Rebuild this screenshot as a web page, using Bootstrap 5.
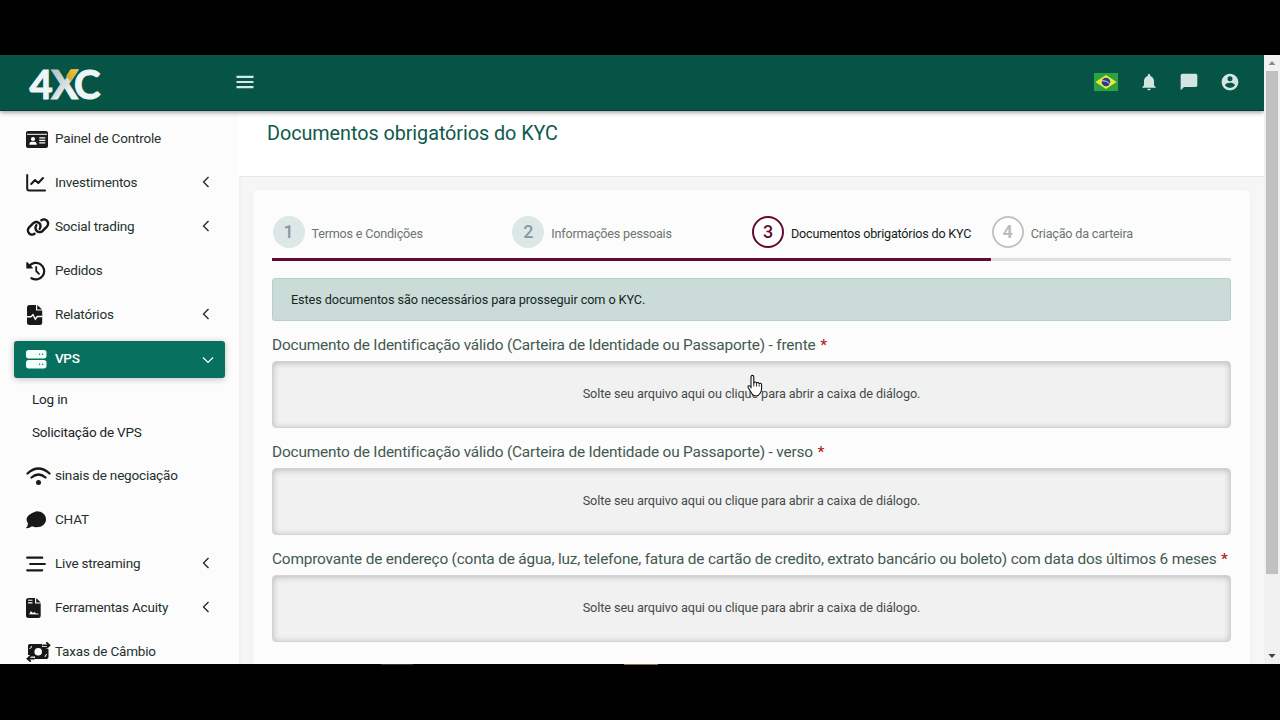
<!DOCTYPE html>
<html lang="pt-BR">
<head>
<meta charset="utf-8">
<meta name="viewport" content="width=device-width, initial-scale=1">
<title>4XC - Documentos obrigatórios do KYC</title>
<link href="https://cdn.jsdelivr.net/npm/bootstrap@5.3.0/dist/css/bootstrap.min.css" rel="stylesheet">
<style>
  body { background:#000; font-family:Roboto,"Liberation Sans",sans-serif; font-size:12.7px; height:720px; overflow:hidden; padding:55px 0 55px; }
  .screen { height:609px; background:#f6f6f6; overflow:hidden; }
  .topbar { height:56px; background:#065446; box-shadow:0 1px 5px rgba(0,0,0,.45); z-index:5; border-bottom:1px solid #023d31; flex:none; }
  .topbar svg { display:block; }
  .side { width:239px; flex:none; background:#fcfcfc; padding:10px 14px 0; box-shadow:0 0 4px rgba(0,0,0,.05); overflow:hidden; }
  .side-item { height:37px; margin-bottom:7px; padding-left:12px; padding-right:14px; border-radius:3px; color:#26302d; font-size:13.5px; letter-spacing:-.19px; text-decoration:none; flex:none; }
  .side-item .ico { width:29px; height:24px; flex:none; margin-top:-1px; }
  .side-item .ico svg { display:block; }
  .side-item .lbl { line-height:20px; margin-top:-3px; white-space:nowrap; }
  .side-item .chev { margin-top:-3px; }
  .side-item.on { background:#07705f; color:#fff; box-shadow:0 1px 6px rgba(0,0,0,.25); font-weight:500; letter-spacing:-.35px; }
  .subs { height:73px; padding:5px 0 0 18px; margin-top:-7px; flex:none; }
  .subs a { display:block; height:33px; line-height:32px; color:#15251b; font-size:13.5px; letter-spacing:-.19px; text-decoration:none; }
  .pagehead { height:66px; background:#fff; border-bottom:1px solid #e6e6e6; padding:9px 0 0 28px; flex:none; }
  .pagehead h1 { font-size:19.8px; font-weight:400; line-height:28px; color:#0f5a4c; margin:0; letter-spacing:-.05px; }
  .wrap { min-width:0; }
  .panel { margin:13px 14px 0 14px; padding:26px 19px 0; background:#fcfcfc; border:0; border-radius:4px; box-shadow:0 0 6px rgba(0,0,0,.035); height:520px; }
  .step { width:25%; height:45px; border-bottom:3px solid #5f0b32; color:#6d7570; white-space:nowrap; font-size:12.6px; letter-spacing:-.2px; }
  .step .num { width:32px; height:32px; border-radius:50%; background:#dce7e8; color:#8797a0; font-size:18px; font-weight:500; line-height:32px; text-align:center; margin-right:7px; margin-left:.500px; flex:none; letter-spacing:0; }
  .step .cap { line-height:18px; padding-top:9px; }
  .step.now { color:#111d18; }
  .step.now .num { background:#fff; border:2px solid #5f0b32; color:#5f0b32; line-height:28px; }
  .step.todo { border-color:#dfdfdf; }
  .step.todo .num { background:#fff; border:2px solid #c3c3c3; color:#bdbdbd; line-height:28px; font-weight:700; }
  .notice { height:43px; margin:17px 0 0; padding:0 18px; background:#cbdcd8; border:1px solid #b7cfca; border-radius:3px; color:#14271f; line-height:41px; letter-spacing:-.1px; }
  .fld { font-size:15.4px; line-height:24px; color:#43594f; white-space:nowrap; height:24px; margin:12px 0 4px; display:block; letter-spacing:-.18px; }
  .fld b { color:#b01e28; font-weight:500; margin-left:1px; }
  .drop { height:67px; background:#f1f1f1; border:1px solid #d2d2d2; border-radius:4px; box-shadow:inset 0 1px 6px rgba(0,0,0,.24); color:#454b48; line-height:64px; text-align:center; letter-spacing:-.1px; }
  .sbar { width:16px; background:#f1f1f1; flex:none; }
  .thumb { width:12px; height:503px; background:#c1c1c1; margin:0 auto; }
  .sliver { height:1px; padding-left:381px; }
  .sliver i { height:1px; }
  .hand { position:absolute; left:746px; top:374px; z-index:9; }
</style>
</head>
<body>
<div class="screen d-flex">
  <div class="flex-grow-1 d-flex flex-column overflow-hidden">
    <header class="topbar d-flex align-items-center position-relative">
      <svg class="ms-4" width="84" height="55" viewBox="24 55 84 55">
        <defs>
          <linearGradient id="silver" x1="52" y1="69" x2="80" y2="99" gradientUnits="userSpaceOnUse"><stop offset="0" stop-color="#b5c3c3"/><stop offset=".5" stop-color="#d5dfe0"/><stop offset=".7" stop-color="#f1f6f6"/></linearGradient>
          <linearGradient id="gold" x1="0" y1="1" x2="1" y2="0"><stop offset="0" stop-color="#cf9c22"/><stop offset="1" stop-color="#f1ca42"/></linearGradient>
        </defs>
        <text font-family="Lato,sans-serif" font-weight="700" font-size="40" fill="#eef5f6" stroke="#eef5f6" stroke-width="1.100" y="98.500" x="29.500" letter-spacing="-1.500">4<tspan fill="url(#silver)" stroke="url(#silver)">X</tspan><tspan dx="-1.500">C</tspan></text>
        <path d="M70.500 69.300h8.300l-8.300 12-4.500-5z" fill="url(#gold)"/>
      </svg>
      <svg style="margin-left:128px;margin-top:-2px" width="18" height="14" viewBox="0 0 18 14"><path d="M.5 1.800h17M.5 7h17M.5 12.200h17" stroke="#d3eae4" stroke-width="2.200"/></svg>
      <div class="ms-auto d-flex align-items-center" style="margin-right:24px;margin-top:-2px">
        <svg width="24" height="18" viewBox="0 0 24 18"><path fill="#2ba343" d="M0 0h24v18H0z"/><path fill="#f4e63d" d="m12 2 10.500 7L12 16 1.500 9z"/><circle cx="12" cy="9" r="4.300" fill="#253d87"/><path d="M8 7.700q4.500-.5 7.800 3.100" stroke="#cddbe8" stroke-width="1" fill="none"/></svg>
        <svg style="margin-left:21px" width="20" height="20" viewBox="0 0 24 24" fill="#d2e5e1"><path d="M12 22c1.100 0 2-.9 2-2h-4c0 1.100.9 2 2 2zm6-6v-5c0-3.070-1.640-5.640-4.500-6.320V4a1.500 1.500 0 0 0-3 0v.68C7.630 5.360 6 7.920 6 11v5l-2 2v1h16v-1z"/></svg>
        <svg style="margin-left:20px" width="20" height="20" viewBox="0 0 24 24" fill="#d2e5e1"><path d="M20 2H4c-1.100 0-2 .9-2 2v18l4-4h14c1.100 0 2-.9 2-2V4c0-1.100-.9-2-2-2z"/></svg>
        <svg style="margin-left:21px" width="20" height="20" viewBox="0 0 24 24" fill="#d2e5e1"><path d="M12 2C6.480 2 2 6.480 2 12s4.480 10 10 10 10-4.480 10-10S17.520 2 12 2zm0 3a3 3 0 1 1 0 6 3 3 0 0 1 0-6zm0 14.200a7.200 7.200 0 0 1-6-3.220c.03-1.990 4-3.080 6-3.080s5.970 1.090 6 3.080a7.200 7.200 0 0 1-6 3.220z"/></svg>
      </div>
    </header>
    <div class="d-flex flex-grow-1 overflow-hidden">
      <nav class="side d-flex flex-column">
        <a class="side-item d-flex align-items-center"><span class="ico d-flex align-items-center"><svg width="22" height="17" viewBox="0 0 22 17"><rect width="22" height="17" rx="2" fill="#1b1c1c"/><path d="M1 3.300h20" stroke="#fff" stroke-width="1"/><circle cx="7" cy="8" r="2.100" fill="#fff"/><path d="M3.300 13.800q0-3 2.500-3h2.400q2.500 0 2.500 3z" fill="#fff"/><path d="M13.300 6.800h6M13.300 9.300h6M13.300 11.800h6" stroke="#fff" stroke-width="1.200"/></svg></span><span class="lbl">Painel de Controle</span></a>
        <a class="side-item d-flex align-items-center"><span class="ico d-flex align-items-center"><svg width="20" height="18" viewBox="0 0 20 18" fill="none" stroke="#171818" stroke-width="2" stroke-linecap="round" stroke-linejoin="round"><path d="M1.200 1v13.500q0 2 2 2H19M5.200 10l3.800-4 3.300 3L17 4"/></svg></span><span class="lbl">Investimentos</span><svg class="chev ms-auto" width="10" height="12" viewBox="0 0 10 12"><path d="M7.500 1 2.500 6l5 5" fill="none" stroke="#222" stroke-width="1.300"/></svg></a>
        <a class="side-item d-flex align-items-center"><span class="ico d-flex align-items-center"><svg width="24" height="20" viewBox="0 0 640 512" fill="#171818"><path d="M579.800 267.700c56.500-56.500 56.500-148 0-204.500c-50-50-128.800-56.500-186.300-15.400l-1.600 1.100c-14.400 10.300-17.700 30.300-7.400 44.600s30.300 17.700 44.600 7.400l1.600-1.100c32.100-22.900 76-19.300 103.800 8.600c31.500 31.500 31.500 82.500 0 114L422.300 334.800c-31.500 31.500-82.500 31.500-114 0c-27.900-27.900-31.500-71.800-8.600-103.800l1.100-1.600c10.300-14.400 6.900-34.400-7.400-44.600s-34.400-6.900-44.600 7.400l-1.100 1.600C206.500 251.200 213 330 263 380c56.500 56.500 148 56.500 204.500 0L579.800 267.700zM60.200 244.300c-56.500 56.500-56.500 148 0 204.500c50 50 128.800 56.500 186.300 15.400l1.600-1.100c14.400-10.300 17.700-30.300 7.400-44.600s-30.300-17.700-44.600-7.400l-1.600 1.100c-32.100 22.900-76 19.300-103.800-8.600C74 372 74 321 105.500 289.500L217.700 177.200c31.500-31.500 82.500-31.500 114 0c27.900 27.900 31.500 71.800 8.600 103.900l-1.100 1.600c-10.300 14.400-6.900 34.400 7.400 44.600s34.400 6.900 44.600-7.400l1.100-1.600C433.500 260.800 427 182 377 132c-56.500-56.500-148-56.500-204.500 0L60.200 244.300z"/></svg></span><span class="lbl">Social trading</span><svg class="chev ms-auto" width="10" height="12" viewBox="0 0 10 12"><path d="M7.500 1 2.500 6l5 5" fill="none" stroke="#222" stroke-width="1.300"/></svg></a>
        <a class="side-item d-flex align-items-center"><span class="ico d-flex align-items-center"><svg width="20" height="20" viewBox="0 0 20 20" fill="none" stroke="#171818" stroke-width="2.200" stroke-linecap="round" stroke-linejoin="round"><path d="M3.200 5.200A8.300 8.300 0 1 1 5.500 17.200"/><path d="M10.200 5.800V10l2.800 2.800" stroke-width="1.800"/><path d="M1 1.800v5.100h5.100z" fill="#171818" stroke-width="1.400"/></svg></span><span class="lbl">Pedidos</span></a>
        <a class="side-item d-flex align-items-center"><span class="ico d-flex align-items-center"><svg style="margin-left:1px" width="16" height="20" viewBox="0 0 16 20"><path fill="#171818" d="M2.500 0H9v5.500h6.200v12q0 2.500-2.500 2.500H2.500Q0 20 0 17.500v-15Q0 0 2.500 0zM10.200 0l5 4.500h-5z"/><path d="M0 11.700h4l2-2 2.300 4.500L10.300 11.500h5" fill="none" stroke="#fcfcfc" stroke-width="1.400"/></svg></span><span class="lbl">Relatórios</span><svg class="chev ms-auto" width="10" height="12" viewBox="0 0 10 12"><path d="M7.500 1 2.500 6l5 5" fill="none" stroke="#222" stroke-width="1.300"/></svg></a>
        <a class="side-item on d-flex align-items-center"><span class="ico d-flex align-items-center"><svg width="21" height="19" viewBox="0 0 21 19" fill="#f4fffb"><rect width="20.500" height="8.400" rx="2.600"/><rect y="10" width="20.500" height="8.400" rx="2.600"/><g fill="#07705f"><circle cx="13.600" cy="4.200" r=".7"/><circle cx="16.600" cy="4.200" r=".7"/><circle cx="13.600" cy="14.200" r=".7"/><circle cx="16.600" cy="14.200" r=".7"/></g></svg></span><span class="lbl">VPS</span><svg class="ms-auto" style="margin-right:-3px;margin-top:1px" width="12" height="10" viewBox="0 0 12 10"><path d="m1 2.500 5 5 5-5" fill="none" stroke="#fff" stroke-width="1.200"/></svg></a>
        <div class="subs"><a>Log in</a><a>Solicitação de VPS</a></div>
        <div style="height:7px;flex:none"></div>
        <a class="side-item d-flex align-items-center"><span class="ico d-flex align-items-center"><svg width="25" height="19" viewBox="0 0 25 19" fill="none" stroke="#171818" stroke-width="2.300" stroke-linecap="round"><path d="M1.500 6.500Q12.500-3.500 23.500 6.500M5.500 10.500q7-6 14 0"/><circle cx="12.500" cy="15.500" r="2.500" fill="#171818" stroke="none"/></svg></span><span class="lbl">sinais de negociação</span></a>
        <a class="side-item d-flex align-items-center"><span class="ico d-flex align-items-center"><svg width="20" height="18" viewBox="0 0 20 18" fill="#171818"><path d="M10.500.2C16 .2 20 3.700 20 8.200s-4 8-9.500 8q-2.400 0-4.500-.9-2.500 2-5.500 2-.7-.2-.2-.8Q2 14.500 2 12.500 .5 10.500.5 8.200.5 3.700 10.500.2z"/></svg></span><span class="lbl">CHAT</span></a>
        <a class="side-item d-flex align-items-center"><span class="ico d-flex align-items-center"><svg width="20" height="16" viewBox="0 0 20 16"><path d="M1.200 1.700h15M4.200 8h14.600M1.200 14.300h15" stroke="#171818" stroke-width="2.200" stroke-linecap="round"/></svg></span><span class="lbl">Live streaming</span><svg class="chev ms-auto" width="10" height="12" viewBox="0 0 10 12"><path d="M7.500 1 2.500 6l5 5" fill="none" stroke="#222" stroke-width="1.300"/></svg></a>
        <a class="side-item d-flex align-items-center"><span class="ico d-flex align-items-center"><svg width="16" height="20" viewBox="0 0 16 20"><path fill="#171818" d="M2.500 0H9v5.500h5.700v12q0 2.500-2.500 2.500H2.500Q0 20 0 17.500v-15Q0 0 2.500 0zM10.200 0l4.500 4.500h-4.500z"/><path d="M2 2.300h4.500M2 4.900h4.500" stroke="#fcfcfc" stroke-width="1.100"/><path d="M2.800 16.300q1.200-.3 2-3.300l2.200 2 1.700-1 1.300 1.600h2.500v1z" fill="#fcfcfc"/></svg></span><span class="lbl">Ferramentas Acuity</span><svg class="chev ms-auto" width="10" height="12" viewBox="0 0 10 12"><path d="M7.500 1 2.500 6l5 5" fill="none" stroke="#222" stroke-width="1.300"/></svg></a>
        <a class="side-item d-flex align-items-center"><span class="ico d-flex align-items-center"><svg width="25" height="20" viewBox="0 0 25 20"><path fill="#171818" d="M2 3.500q0-1.500 2-1.500h12v3h4v2h2.500v8q0 2-2 2H9v-2.500H4V13H2z"/><circle cx="12.200" cy="9.800" r="3.800" fill="#fcfcfc"/><path d="M3.500 6.500q2 0 2-2.500M21 12.500q-2 0-2 2.500" fill="none" stroke="#fcfcfc"/><path d="M17 3.300h6.500M20.800.8l2.700 2.500-2.700 2.500M8 16.700H1.500m2.700-2.500-2.700 2.500 2.700 2.500" fill="none" stroke="#171818" stroke-width="1.800" stroke-linecap="round"/></svg></span><span class="lbl">Taxas de Câmbio</span></a>
      </nav>
      <main class="wrap flex-grow-1 d-flex flex-column">
        <div class="pagehead"><h1>Documentos obrigatórios do KYC</h1></div>
        <section class="panel card flex-shrink-0">
          <div class="d-flex">
            <div class="step d-flex"><span class="num">1</span><span class="cap">Termos e Condições</span></div>
            <div class="step d-flex"><span class="num">2</span><span class="cap">Informações pessoais</span></div>
            <div class="step now d-flex"><span class="num">3</span><span class="cap">Documentos obrigatórios do KYC</span></div>
            <div class="step todo d-flex"><span class="num">4</span><span class="cap">Criação da carteira</span></div>
          </div>
          <div class="notice alert">Estes documentos são necessários para prosseguir com o KYC.</div>
          <label class="fld">Documento de Identificação válido (Carteira de Identidade ou Passaporte) - frente <b>*</b></label>
          <div class="drop">Solte seu arquivo aqui ou clique para abrir a caixa de diálogo.</div>
          <label class="fld">Documento de Identificação válido (Carteira de Identidade ou Passaporte) - verso <b>*</b></label>
          <div class="drop">Solte seu arquivo aqui ou clique para abrir a caixa de diálogo.</div>
          <label class="fld">Comprovante de endereço (conta de água, luz, telefone, fatura de cartão de credito, extrato bancário ou boleto) com data dos últimos 6 meses <b>*</b></label>
          <div class="drop">Solte seu arquivo aqui ou clique para abrir a caixa de diálogo.</div>
        </section>
      </main>
    </div>
  </div>
  <div class="sbar d-flex flex-column">
    <svg class="d-block" width="16" height="16" viewBox="0 0 16 16"><path d="m8 6 3.500 4h-7z" fill="#8b8b8b"/></svg>
    <div class="thumb"></div>
    <svg class="d-block mt-auto" width="16" height="16" viewBox="0 0 16 16"><path d="M4.500 6h7L8 10z" fill="#3c3c3c"/></svg>
  </div>
</div>
<div class="sliver d-flex"><i style="width:32px;background:#333"></i><i style="width:34px;margin-left:211px;background:#85763a"></i></div>
<svg class="hand" width="18" height="24" viewBox="0 0 18 24"><path d="M5 14V3q0-1.600 1.400-1.600T7.800 3v6q.3-1 1.400-1t1.400 1.300q.3-.8 1.300-.8t1.300 1.300q.3-.6 1.200-.6 1.200 0 1.200 1.500V15q0 2-1.500 4.200Q12.500 22 10 22q-2.500 0-4-2.300Q4.500 17.500 2.400 14q-.9-1.600.2-2.200 1.200-.5 2.400 1.300z" fill="#fff" stroke="#111" stroke-width="1.100" stroke-linejoin="round"/><path d="M7.800 8.500v4M10.500 9.500v3M13.200 10.500v2" stroke="#111" stroke-width=".9"/></svg>
<script src="https://cdn.jsdelivr.net/npm/bootstrap@5.3.0/dist/js/bootstrap.bundle.min.js"></script>
</body>
</html>
